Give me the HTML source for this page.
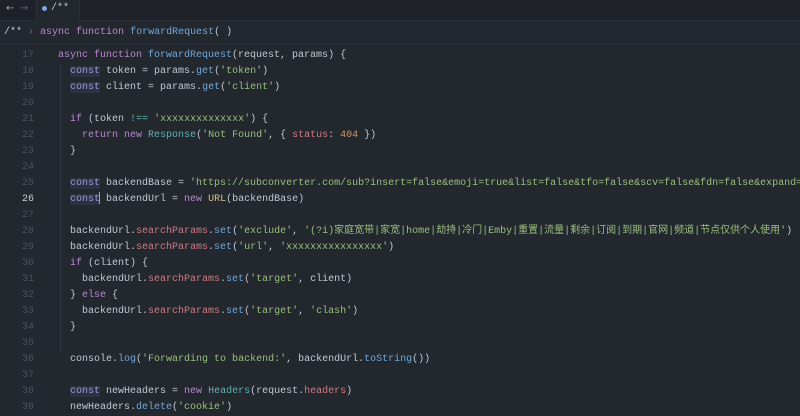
<!DOCTYPE html>
<html><head><meta charset="utf-8"><style>
html,body{margin:0;padding:0;width:800px;height:416px;overflow:hidden;background:#23272e;}
body{font-family:"Liberation Mono","Noto Sans CJK SC",monospace;font-size:10px;color:#c3c7cf;position:relative;}
.tabbar{position:absolute;left:0;top:0;width:800px;height:20px;background:#1e2127;border-bottom:1px solid #2c3038;}
.tab{position:absolute;left:36px;top:0;width:42px;height:21px;background:#23272e;border-right:1px solid #2c3038;border-left:1px solid #2c3038;}
.crumb{position:absolute;left:4px;top:27px;color:#c3c7cf;white-space:nowrap;}
.sep{position:absolute;left:0;top:44px;width:800px;height:1px;background:#2a2e36;}
.ln{position:absolute;left:0;width:34px;text-align:right;color:#4b5160;height:16px;line-height:16px;}
.ln.cur{color:#c8ccd4;}
.code{position:absolute;left:58px;white-space:pre;height:16px;line-height:16px;}
.k{color:#b888d0}.c{color:#9a9ad8;background:#2d3240}.f{color:#6fa8dc}.s{color:#9bbf7e}.t{color:#5fb3b3}.p{color:#d07a80}.n{color:#d19a66}.cls{color:#e0c07a}
.guide{position:absolute;left:60px;width:1px;background:#33373f;}
</style></head><body>
<div class="tabbar">
<span style="position:absolute;left:6px;top:3px;color:#9aa0aa;font-family:'DejaVu Sans',sans-serif;font-size:10px">←</span>
<span style="position:absolute;left:20px;top:3px;color:#5c6370;font-family:'DejaVu Sans',sans-serif;font-size:10px">→</span>
<div class="tab"><span style="position:absolute;left:5px;top:6px;width:5px;height:5px;border-radius:50%;background:#7ea6e0"></span><span style="position:absolute;left:14px;top:3px;color:#c3c7cf">/**</span></div>
</div>
<div class="crumb">/**<span style="color:#6b7280"> › </span><span class="k">async function</span> <span class="f">forwardRequest</span>( )</div>
<div class="sep"></div>
<div class="guide" style="top:64px;height:288px"></div>

<div class="ln" style="top:48px">17</div><div class="code" style="top:48px"><span class="k">async function</span> <span class="f">forwardRequest</span>(request, params) {</div>
<div class="ln" style="top:64px">18</div><div class="code" style="top:64px">  <span class="c">const</span> token = params.<span class="f">get</span>(<span class="s">'token'</span>)</div>
<div class="ln" style="top:80px">19</div><div class="code" style="top:80px">  <span class="c">const</span> client = params.<span class="f">get</span>(<span class="s">'client'</span>)</div>
<div class="ln" style="top:96px">20</div>
<div class="ln" style="top:112px">21</div><div class="code" style="top:112px">  <span class="k">if</span> (token <span class="t">!==</span> <span class="s">'xxxxxxxxxxxxxx'</span>) {</div>
<div class="ln" style="top:128px">22</div><div class="code" style="top:128px">    <span class="k">return new</span> <span class="t">Response</span>(<span class="s">'Not Found'</span>, { <span class="p">status</span>: <span class="n">404</span> })</div>
<div class="ln" style="top:144px">23</div><div class="code" style="top:144px">  }</div>
<div class="ln" style="top:160px">24</div>
<div class="ln" style="top:176px">25</div><div class="code" style="top:176px">  <span class="c">const</span> backendBase = <span class="s">'https://subconverter.com/sub?insert=false&amp;emoji=true&amp;list=false&amp;tfo=false&amp;scv=false&amp;fdn=false&amp;expand=true'</span></div>
<div class="ln cur" style="top:192px">26</div><div class="code" style="top:192px">  <span class="c">const</span><span style="display:inline-block;width:1px;height:12px;background:#7ea6e0;vertical-align:middle;margin-left:-1px"></span> backendUrl = <span class="k">new</span> <span class="cls">URL</span>(backendBase)</div>
<div class="ln" style="top:208px">27</div>
<div class="ln" style="top:224px">28</div><div class="code" style="top:224px">  backendUrl.<span class="p">searchParams</span>.<span class="f">set</span>(<span class="s">'exclude'</span>, <span class="s">'(?i)家庭宽带|家宽|home|劫持|冷门|Emby|重置|流量|剩余|订阅|到期|官网|频道|节点仅供个人使用'</span>)</div>
<div class="ln" style="top:240px">29</div><div class="code" style="top:240px">  backendUrl.<span class="p">searchParams</span>.<span class="f">set</span>(<span class="s">'url'</span>, <span class="s">'xxxxxxxxxxxxxxxx'</span>)</div>
<div class="ln" style="top:256px">30</div><div class="code" style="top:256px">  <span class="k">if</span> (client) {</div>
<div class="ln" style="top:272px">31</div><div class="code" style="top:272px">    backendUrl.<span class="p">searchParams</span>.<span class="f">set</span>(<span class="s">'target'</span>, client)</div>
<div class="ln" style="top:288px">32</div><div class="code" style="top:288px">  } <span class="k">else</span> {</div>
<div class="ln" style="top:304px">33</div><div class="code" style="top:304px">    backendUrl.<span class="p">searchParams</span>.<span class="f">set</span>(<span class="s">'target'</span>, <span class="s">'clash'</span>)</div>
<div class="ln" style="top:320px">34</div><div class="code" style="top:320px">  }</div>
<div class="ln" style="top:336px">35</div>
<div class="ln" style="top:352px">36</div><div class="code" style="top:352px">  console.<span class="f">log</span>(<span class="s">'Forwarding to backend:'</span>, backendUrl.<span class="f">toString</span>())</div>
<div class="ln" style="top:368px">37</div>
<div class="ln" style="top:384px">38</div><div class="code" style="top:384px">  <span class="c">const</span> newHeaders = <span class="k">new</span> <span class="t">Headers</span>(request.<span class="p">headers</span>)</div>
<div class="ln" style="top:400px">39</div><div class="code" style="top:400px">  newHeaders.<span class="f">delete</span>(<span class="s">'cookie'</span>)</div>
</body></html>
